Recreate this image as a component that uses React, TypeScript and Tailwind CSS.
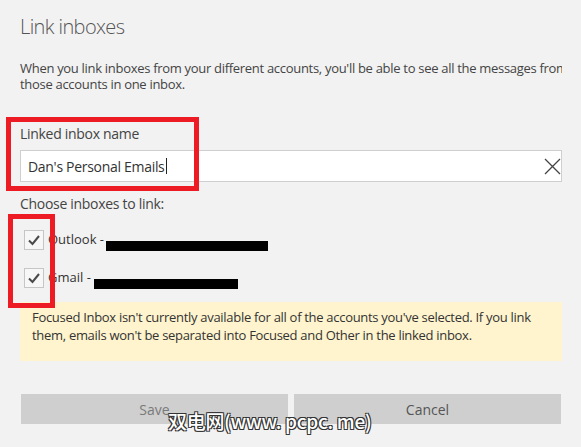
import React from "react";

const font = { fontFamily: '"Open Sans", "Noto Sans", sans-serif' };

const CheckRow = ({ label, barWidth, barLeft }: { label: string; barWidth: number; barLeft: number }) => (
  <div className="flex items-center h-5 relative">
    <div className="w-5 h-5 border border-[#c6c6c6] bg-[#f7f7f7] flex items-center justify-center ml-1">
      <svg width="14" height="12" viewBox="0 0 14 12">
        <path d="M2 6.5 L5.5 10 L12 2" fill="none" stroke="#4a4a4a" strokeWidth="2" />
      </svg>
    </div>
    <span className="ml-1 text-[13px] text-[#333] whitespace-nowrap">{label}</span>
    <div className="absolute bg-black h-[10px] top-[11px]" style={{ left: barLeft, width: barWidth }} />
  </div>
);

export default function App() {
  return (
    <div className="relative w-[581px] h-[447px] bg-[#f2f2f2] overflow-hidden" style={font}>
      <div className="pl-5 w-[562px] overflow-hidden">
        <h1 className="pt-[13px] text-[20px] leading-[28px] font-light text-[#555] tracking-[-0.6px]">Link inboxes</h1>
        <p className="mt-[19px] text-[13px] leading-[16px] text-[#444] whitespace-nowrap tracking-[-0.3px]">
          When you link inboxes from your different accounts, you'll be able to see all the messages from
          <br />
          those accounts in one inbox.
        </p>
        <div className="mt-[33px] text-[14px] leading-[18px] text-[#444] tracking-[-0.3px]">Linked inbox name</div>
        <div className="mt-[7px] h-[32px] bg-white border border-[#cfcfcf] flex items-center pl-[7px] relative">
          <span className="text-[14px] text-[#333] tracking-[-0.3px]">Dan's Personal Emails</span>
          <span className="w-px h-[16px] bg-[#222] ml-[1px]" />
          <svg className="absolute right-0 top-[7px]" width="17" height="17" viewBox="0 0 17 17">
            <path d="M1 1 L16 16 M16 1 L1 16" stroke="#444" strokeWidth="1.3" />
          </svg>
        </div>
        <div className="mt-[13px] text-[14px] leading-[18px] text-[#444] tracking-[-0.3px]">Choose inboxes to link:</div>
        <div className="mt-[17px] flex flex-col gap-[18px]">
          <CheckRow label="Outlook -" barLeft={86} barWidth={162} />
          <CheckRow label="Gmail -" barLeft={74} barWidth={144} />
        </div>
        <div className="mt-[14px] h-[59px] bg-[#fff4ce] px-3 pt-[6px] text-[13px] leading-[18px] text-[#333] tracking-[-0.3px]">
          Focused Inbox isn't currently available for all of the accounts you've selected. If you link
          <br />
          them, emails won't be separated into Focused and Other in the linked inbox.
        </div>
        <div className="mt-[33px] flex gap-[6px] pl-[1px]">
          <button className="w-[267px] h-[30px] bg-[#cfcfcf] text-[14px] text-[#7a7a7a]">Save</button>
          <button className="w-[267px] h-[30px] bg-[#cfcfcf] text-[14px] text-[#555]">Cancel</button>
        </div>
      </div>

      <div className="absolute left-[6px] top-[117px] w-[193px] h-[74px] border-[5px] border-[#ed1c24]" />
      <div className="absolute left-[8px] top-[214px] w-[47px] h-[94px] border-[5px] border-[#ed1c24]" />

      <div
        className="absolute left-[168px] top-[409px] text-[19px] leading-[24px] font-medium text-white whitespace-nowrap tracking-[-0.3px]"
        style={{
          fontFamily: '"Noto Sans CJK SC", sans-serif',
          textShadow: "1px 1px 0 #333, -1px -1px 0 #333, 1px -1px 0 #333, -1px 1px 0 #333",
        }}
      >
        双电网(www. pcpc. me)
      </div>
    </div>
  );
}
